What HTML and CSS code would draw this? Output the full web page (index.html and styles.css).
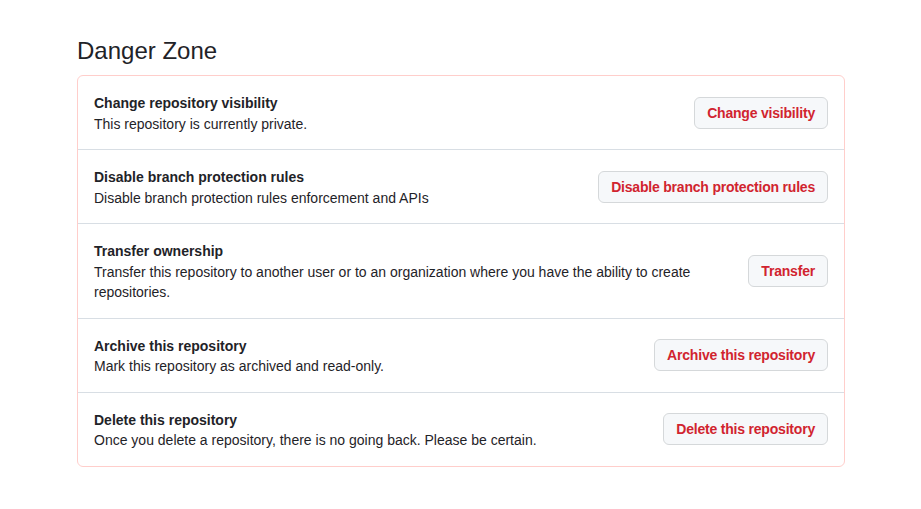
FILE: index.html
```html
<!DOCTYPE html>
<html lang="en">
<head>
<meta charset="utf-8">
<title>Danger Zone</title>
<link rel="stylesheet" href="styles.css">
</head>
<body>
<main class="page">
  <h2 class="subhead">Danger Zone</h2>
  <div class="danger-box">
    <div class="row">
      <div class="row-text">
        <strong class="row-title">Change repository visibility</strong>
        <p class="row-desc">This repository is currently private.</p>
      </div>
      <button class="btn-danger">Change visibility</button>
    </div>
    <div class="row">
      <div class="row-text">
        <strong class="row-title">Disable branch protection rules</strong>
        <p class="row-desc">Disable branch protection rules enforcement and APIs</p>
      </div>
      <button class="btn-danger">Disable branch protection rules</button>
    </div>
    <div class="row">
      <div class="row-text">
        <strong class="row-title">Transfer ownership</strong>
        <p class="row-desc">Transfer this repository to another user or to an organization where you have the ability to create repositories.</p>
      </div>
      <button class="btn-danger">Transfer</button>
    </div>
    <div class="row">
      <div class="row-text">
        <strong class="row-title">Archive this repository</strong>
        <p class="row-desc">Mark this repository as archived and read-only.</p>
      </div>
      <button class="btn-danger">Archive this repository</button>
    </div>
    <div class="row">
      <div class="row-text">
        <strong class="row-title">Delete this repository</strong>
        <p class="row-desc">Once you delete a repository, there is no going back. Please be certain.</p>
      </div>
      <button class="btn-danger">Delete this repository</button>
    </div>
  </div>
</main>
</body>
</html>
```
FILE: styles.css
```css
* { box-sizing: border-box; }
html, body { margin: 0; padding: 0; background: #ffffff; }
body {
  font-family: "Liberation Sans", "Noto Sans", sans-serif;
  font-size: 14px;
  line-height: 1.5;
  color: #1f2328;
}
.page {
  width: 768px;
  margin-left: 77px;
  padding-top: 33px;
}
.subhead {
  margin: 0 0 6px 0;
  font-size: 24px;
  font-weight: 400;
  line-height: 36px;
  color: #1f2328;
}
.danger-box {
  border: 1px solid #ffcecb;
  border-radius: 6px;
}
.row {
  display: flex;
  align-items: center;
  gap: 16px;
  padding: 16px;
  border-top: 1px solid #d8dee4;
}
.row:first-child { border-top: 0; }
.row-text { flex: 1 1 auto; }
.row-title {
  display: block;
  font-weight: 600;
  line-height: 20.5px;
  padding-top: 1px;
}
.row-desc {
  margin: 0;
  line-height: 20.5px;
  margin-bottom: -1px;
}
.btn-danger {
  flex: 0 0 auto;
  height: 32px;
  padding: 0 12px;
  font-family: inherit;
  font-size: 14px;
  font-weight: 600;
  letter-spacing: -0.2px;
  color: #d1242f;
  background: #f6f8fa;
  border: 1px solid #d5d8da;
  border-radius: 6px;
  white-space: nowrap;
  cursor: pointer;
}
```
